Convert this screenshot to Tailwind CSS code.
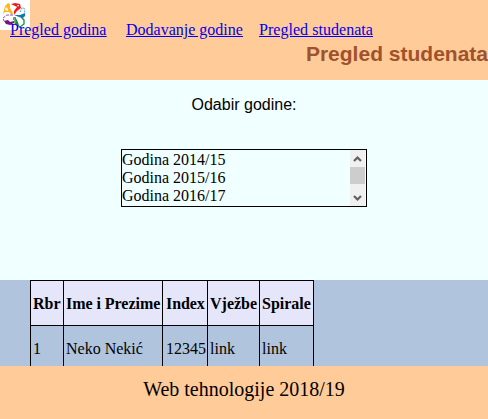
<!DOCTYPE html>
<html lang="bs">
<head>
<meta charset="utf-8">
<title>Pregled studenata</title>
<script src="https://cdn.jsdelivr.net/npm/@tailwindcss/browser@4"></script>
</head>
<body class="flex h-[419px] w-[488px] flex-col overflow-hidden bg-[#f0ffff] font-['Liberation_Serif',serif] text-[16px] leading-[18px] text-black">
<header class="relative h-[80px] shrink-0 bg-[#ffcb99]">
  <svg class="absolute top-0 left-0 h-[30px] w-[30px] bg-white" viewBox="0 0 30 30" fill="none">
    <path d="M3 14L4 10L5 6L8 3L10 4L10 8L13 13L12 15L9 12L5 12Z" fill="#ffb81c"/>
    <path d="M5 10L6 7L8 9L8 11Z" fill="#fff"/>
    <path d="M11 4L15 3L20 4L21 8L17 11L14 15L14 11L17 7L15 6Z" fill="#ed1c24"/>
    <path d="M17 5L19 5L18 7Z" fill="#fff"/>
    <path d="M14 15L20 15L25 13L25 16L23 18L19 17Z" fill="#087cb5"/>
    <path d="M20 12L22 8L24 8L25 13" stroke="#4aa3cc" stroke-width="1" stroke-dasharray="2 1"/>
    <path d="M15 17L15 23L20 27L24 24L24 20L21 17" stroke="#168c3c" stroke-width="1.3"/>
    <path d="M15 17L17 20L19 25L16 24Z" fill="#168c3c"/>
    <path d="M13 15L7 15L3 18L4 21M14 17L13 21" stroke="#9b4ba6" stroke-width="1" stroke-dasharray="3 1"/>
    <path d="M4 21L8 20L10 22L14 21L14 23L10 25L6 24Z" fill="#78127c"/>
  </svg>
  <nav class="relative flex pt-[21px] pl-[10px] text-[#0000ee] underline">
    <a href="#" class="w-[116px]">Pregled godina</a>
    <a href="#" class="w-[133px]">Dodavanje godine</a>
    <a href="#" class="tracking-[0.04px]">Pregled studenata</a>
  </nav>
  <h1 class="mt-[3px] text-right font-['Liberation_Sans',sans-serif] text-[21px] leading-[24px] font-bold text-[#a0522d]">Pregled studenata</h1>
</header>
<main class="flex h-[200px] shrink-0 flex-col items-center pt-[16px]">
  <label class="font-['Liberation_Sans',sans-serif] text-[16px]">Odabir godine:</label>
  <div class="mt-[35px] flex h-[58px] w-[246px] border border-black pr-px">
    <ul class="flex-1 pt-px">
      <li>Godina 2014/15</li>
      <li>Godina 2015/16</li>
      <li>Godina 2016/17</li>
    </ul>
    <div class="flex w-[15px] flex-col bg-[#f0f0f0]">
      <svg class="h-[17px] w-[15px]" viewBox="0 0 15 17"><path d="M4 11L7.5 7.5L11 11" fill="none" stroke="#606060" stroke-width="2.2"/></svg>
      <div class="h-[17px] bg-[#cdcdcd]"></div>
      <svg class="mt-[5px] h-[17px] w-[15px]" viewBox="0 0 15 17"><path d="M4 7L7.5 10.5L11 7" fill="none" stroke="#606060" stroke-width="2.2"/></svg>
    </div>
  </div>
</main>
<section class="h-[86px] shrink-0 overflow-hidden bg-[#b0c4de] pl-[30px]">
  <table class="w-[284px] table-fixed border-separate border-spacing-0 border-t border-l border-black text-left">
    <colgroup><col class="w-[33px]"><col class="w-[99px]"><col class="w-[45px]"><col class="w-[52px]"><col class="w-[54px]"></colgroup>
    <thead>
      <tr class="h-[45px] bg-[#e6e6fa] whitespace-nowrap">
        <th class="border-r border-b border-black pt-[2px] pl-[2px]">Rbr</th>
        <th class="border-r border-b border-black pt-[2px] pl-[2px] tracking-[-0.04px]">Ime i Prezime</th>
        <th class="border-r border-b border-black pt-[2px] pl-[3px] tracking-[-0.1px]">Index</th>
        <th class="border-r border-b border-black pt-[2px] pl-[2px]">Vježbe</th>
        <th class="border-r border-b border-black pt-[2px] pl-[2px]">Spirale</th>
      </tr>
    </thead>
    <tbody>
      <tr class="h-[45px] whitespace-nowrap">
        <td class="border-r border-b border-black pt-[2px] pl-[2px]">1</td>
        <td class="border-r border-b border-black pt-[2px] pl-[2px]">Neko Nekić</td>
        <td class="border-r border-b border-black pt-[2px] pl-[3px]">12345</td>
        <td class="border-r border-b border-black pt-[2px] pl-[2px]">link</td>
        <td class="border-r border-b border-black pt-[2px] pl-[2px]">link</td>
      </tr>
    </tbody>
  </table>
</section>
<footer class="h-[53px] shrink-0 bg-[#ffcb99] pt-[11px] text-center text-[20px] leading-[24px]">Web tehnologije 2018/19</footer>
</body>
</html>
